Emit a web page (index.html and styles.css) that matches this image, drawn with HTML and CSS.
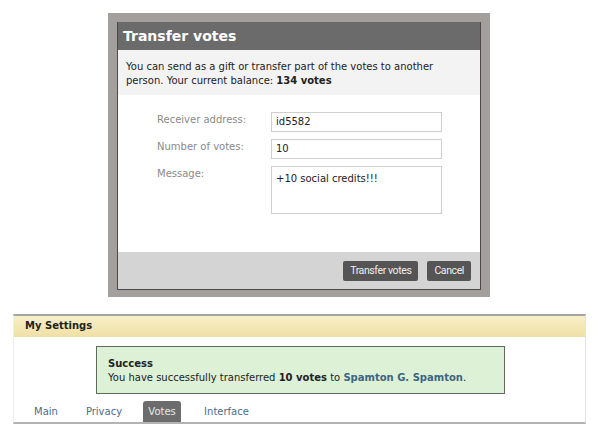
FILE: index.html
```html
<!DOCTYPE html>
<html>
<head>
<meta charset="utf-8">
<link rel="stylesheet" href="styles.css">
</head>
<body>
<div class="frame">
  <div class="dialog">
    <div class="dlg-head">Transfer votes</div>
    <div class="dlg-desc">
      <div>You can send as a gift or transfer part of the votes to another</div>
      <div>person. Your current balance: <b>134 votes</b></div>
    </div>
    <div class="dlg-form">
      <div class="row">
        <div class="label">Receiver address:</div>
        <div class="field">id5582</div>
      </div>
      <div class="row">
        <div class="label">Number of votes:</div>
        <div class="field">10</div>
      </div>
      <div class="row">
        <div class="label">Message:</div>
        <div class="field area">+10 social credits!!!</div>
      </div>
    </div>
    <div class="dlg-foot">
      <span class="btn">Transfer votes</span>
      <span class="btn">Cancel</span>
    </div>
  </div>
</div>

<div class="panel">
  <div class="panel-head">My Settings</div>
  <div class="panel-body">
    <div class="success">
      <div class="s-title">Success</div>
      <div>You have successfully transferred <b>10 votes</b> to <span class="link">Spamton G. Spamton</span>.</div>
    </div>
    <div class="tabs">
      <span class="tab t-main">Main</span>
      <span class="tab t-priv">Privacy</span>
      <span class="tab active">Votes</span>
      <span class="tab t-int">Interface</span>
    </div>
  </div>
</div>
</body>
</html>
```
FILE: styles.css
```css
* { box-sizing: border-box; }
body {
  margin: 0;
  background: #fff;
  font-family: "DejaVu Sans", Verdana, sans-serif;
  font-size: 10px;
  color: #222;
}
.frame {
  margin: 13px 0 0 108px;
  width: 382px;
  height: 284px;
  background: #a29f9d;
  padding: 9px 9px 7px 9px;
}
.dialog {
  height: 100%;
  border: 1px solid #4a4a4a;
  border-top: 0;
  background: #fff;
  display: flex;
  flex-direction: column;
}
.dlg-head {
  height: 28px;
  background: #6b6b6b;
  color: #fff;
  font-weight: bold;
  font-size: 14px;
  line-height: 28px;
  padding-left: 5px;
}
.dlg-desc {
  background: #f3f3f3;
  height: 45px;
  padding: 10px 8px 0 8px;
  line-height: 14px;
  font-size: 10px;
  color: #222;
}
.dlg-form {
  flex: 1;
  padding: 17px 0 0 39px;
  display: flex;
  flex-direction: column;
  gap: 7px;
}
.row {
  display: flex;
}
.label {
  width: 114px;
  color: #8a8a8a;
  padding-top: 2px;
  font-size: 10px;
}
.field {
  width: 171px;
  height: 20px;
  border: 1px solid #cfcfcf;
  padding: 3px 0 0 4px;
  font-size: 10px;
  color: #222;
}
.field.area {
  height: 48px;
  padding-top: 6px;
}
.dlg-foot {
  height: 37px;
  background: #d4d4d4;
  display: flex;
  justify-content: flex-end;
  align-items: flex-start;
  gap: 9px;
  padding: 9px 9px 0 0;
}
.btn {
  background: #555;
  color: #eee;
  font-family: Roboto, "Liberation Sans", sans-serif;
  font-size: 10.5px;
  letter-spacing: -0.4px;
  height: 20px;
  line-height: 20px;
  padding: 0 7px;
  border-radius: 2px;
}
.panel {
  margin: 17px 0 0 13px;
  width: 573px;
  border-top: 2px solid #a5a5a5;
  border-bottom: 2px solid #b3b3b3;
  border-right: 1px solid #e3e3e3;
  border-left: 1px solid #eee;
}
.panel-head {
  height: 21px;
  background: linear-gradient(#f8efc6, #efe0a6);
  font-weight: bold;
  padding: 4px 0 0 11px;
  color: #222;
}
.panel-body {
  background: #fff;
  padding-top: 9px;
}
.success {
  margin-left: 82px;
  width: 409px;
  height: 48px;
  background: #dcf1d6;
  border: 1px solid #5d6b5e;
  padding: 10px 0 0 11px;
  line-height: 14px;
  color: #222;
}
.s-title { font-weight: bold; }
.link { color: #3e6484; font-weight: bold; }
.tabs {
  display: flex;
  margin-top: 7px;
  height: 21px;
  align-items: stretch;
}
.tab {
  color: #4e6b8a;
  line-height: 20px;
  padding-top: 1px;
}
.t-main { margin-left: 20px; }
.t-priv { margin-left: 28px; }
.tab.active {
  margin-left: 21px;
  width: 38px;
  text-align: center;
  background: #6c6c6c;
  color: #e8e8e8;
  border-radius: 3px 3px 0 0;
}
.t-int { margin-left: 23px; }
```
